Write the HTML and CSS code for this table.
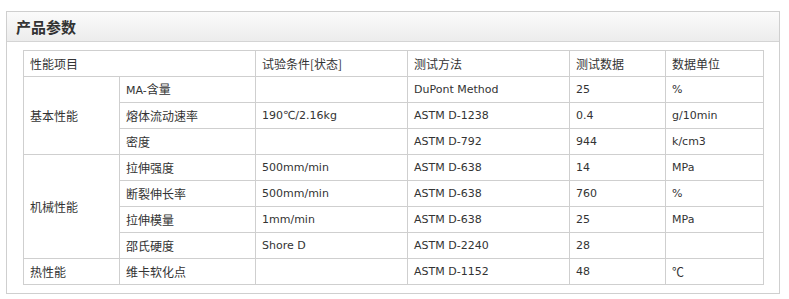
FILE: index.html
```html
<!DOCTYPE html>
<html lang="zh">
<head>
<meta charset="utf-8">
<title>产品参数</title>
<link rel="stylesheet" href="styles.css">
</head>
<body>
<div class="panel">
  <div class="panel-head"><h2 class="panel-title">产品参数</h2></div>
  <div class="panel-body">
    <table class="params">
      <colgroup>
        <col class="c1"><col class="c2"><col class="c3"><col class="c4"><col class="c5"><col class="c6">
      </colgroup>
      <tr><td colspan="2" class="zh">性能项目</td><td class="zh">试验条件[状态]</td><td class="zh">测试方法</td><td class="zh">测试数据</td><td class="zh">数据单位</td></tr>
      <tr><td rowspan="3" class="zh">基本性能</td><td>MA-<span class="zh">含量</span></td><td></td><td>DuPont Method</td><td>25</td><td>%</td></tr>
      <tr><td class="zh">熔体流动速率</td><td>190℃/2.16kg</td><td>ASTM D-1238</td><td>0.4</td><td>g/10min</td></tr>
      <tr><td class="zh">密度</td><td></td><td>ASTM D-792</td><td>944</td><td>k/cm3</td></tr>
      <tr><td rowspan="4" class="zh">机械性能</td><td class="zh">拉伸强度</td><td>500mm/min</td><td>ASTM D-638</td><td>14</td><td>MPa</td></tr>
      <tr><td class="zh">断裂伸长率</td><td>500mm/min</td><td>ASTM D-638</td><td>760</td><td>%</td></tr>
      <tr><td class="zh">拉伸模量</td><td>1mm/min</td><td>ASTM D-638</td><td>25</td><td>MPa</td></tr>
      <tr><td class="zh">邵氏硬度</td><td>Shore D</td><td>ASTM D-2240</td><td>28</td><td></td></tr>
      <tr><td class="zh">热性能</td><td class="zh">维卡软化点</td><td></td><td>ASTM D-1152</td><td>48</td><td class="zh">℃</td></tr>
    </table>
  </div>
</div>
</body>
</html>
```
FILE: styles.css
```css
html, body {
  margin: 0;
  padding: 0;
  background: #fff;
}
body {
  font-family: "DejaVu Sans", "Noto Sans CJK SC", sans-serif;
  font-size: 11px;
  color: #333;
}
.panel {
  box-sizing: border-box;
  width: 774px;
  height: 283px;
  margin: 11px 0 0 6px;
  border: 1px solid #cfcfcf;
}
.panel-head {
  height: 29px;
  border-bottom: 1px solid #d4d4d4;
  background: linear-gradient(#fbfbfb, #ececec);
  display: flex;
  align-items: center;
  padding-left: 9px;
}
.panel-title {
  margin: 0;
  font-family: "Noto Sans CJK SC", sans-serif;
  font-size: 15px;
  font-weight: bold;
  color: #333;
}
.panel-body {
  padding: 8px 0 0 16px;
}
.params {
  border-collapse: collapse;
  table-layout: fixed;
  width: 740px;
}
.c1 { width: 96px; }
.c2 { width: 136px; }
.c3 { width: 152px; }
.c4 { width: 162px; }
.c5 { width: 96px; }
.c6 { width: 98px; }
.params td {
  border: 1px solid #cfcfcf;
  height: 26px;
  padding: 0 6px;
  box-sizing: border-box;
  vertical-align: middle;
  white-space: nowrap;
  font-size: 11px;
  line-height: 14px;
  color: #333;
}
.params .zh {
  font-family: "Noto Sans CJK SC", sans-serif;
  font-size: 12px;
}
```
